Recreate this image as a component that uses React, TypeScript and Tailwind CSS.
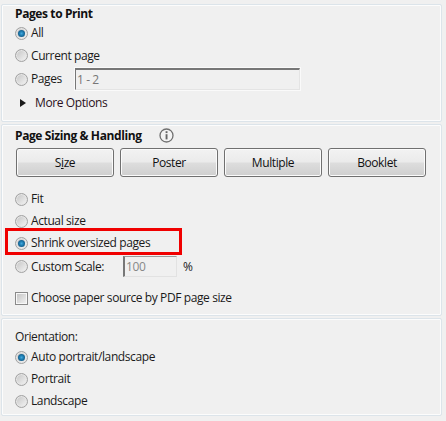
import React from "react";

const font = { fontFamily: '"Open Sans", "Noto Sans", sans-serif' };

function Radio({ checked = false }: { checked?: boolean }) {
  return (
    <span className="relative flex h-[13px] w-[13px] shrink-0 items-center justify-center rounded-full border border-[#a2a2a2] bg-gradient-to-br from-[#c4c4c4] to-[#f6f6f6] shadow-[inset_0_0_0_1px_#e6e6e6]">
      {checked && (
        <span className="h-[7px] w-[7px] rounded-full bg-[radial-gradient(circle,#42a8dc_0%,#1c78ac_45%,#0c3f62_100%)]" />
      )}
    </span>
  );
}

function RadioRow({ label, checked, h = 22 }: { label: string; checked?: boolean; h?: number }) {
  return (
    <div className="flex items-center gap-[3px]" style={{ height: h }}>
      <Radio checked={checked} />
      <span>{label}</span>
    </div>
  );
}

function Btn({ children }: { children: React.ReactNode }) {
  return (
    <button className="h-[29px] w-[98px] rounded-[3px] border border-[#707070] bg-[linear-gradient(#f2f2f2_0%,#ebebeb_48%,#dddddd_52%,#cfcfcf_100%)] text-center text-[12px] text-[#111] shadow-[inset_0_0_0_1px_#fbfbfb]">
      {children}
    </button>
  );
}

export default function App() {
  return (
    <div
      className="relative flex h-[421px] w-[446px] flex-col gap-[2px] overflow-hidden bg-[#f0f0f0] pl-[1px] pr-[4px] pt-[4px] text-[12px] leading-none tracking-[-0.4px] text-[#1a1a1a]"
      style={font}
    >
      <section className="h-[118px] rounded-[2px] border border-[#dce4ea] pl-[13px] shadow-[inset_0_0_0_1px_#fcfcfc]">
        <div className="flex h-[15px] items-end font-bold text-[#111]">Pages to Print</div>
        <div className="h-[2px]" />
        <RadioRow label="All" checked />
        <RadioRow label="Current page" h={23} />
        <div className="flex h-[24px] items-center">
          <Radio />
          <span className="ml-[3px] w-[44px]">Pages</span>
          <div className="flex h-[22px] w-[225px] items-center border border-[#e4e4e4] border-l-[#777] border-t-2 border-t-[#777] bg-[#f0f0f0] pl-[1px] text-[#777] shadow-[0_0_0_1px_#fafafa]">
            1 - 2
          </div>
        </div>
        <div className="flex h-[23px] items-center pl-[5px]">
          <svg width="6" height="8" viewBox="0 0 6 8" className="shrink-0">
            <path d="M0 0 L6 4 L0 8 Z" fill="#1a1a1a" />
          </svg>
          <span className="ml-[9px] text-[#2a1020]">More Options</span>
        </div>
      </section>

      <section className="h-[192px] rounded-[2px] border border-[#dce4ea] pl-[13px] shadow-[inset_0_0_0_1px_#fcfcfc]">
        <div className="flex h-[17px] items-end font-bold text-[#111]">
          <span>Page Sizing &amp; Handling</span>
          <svg width="15" height="15" viewBox="0 0 15 15" className="ml-[17px] mb-[-1px]">
            <circle cx="7.5" cy="7.5" r="6.5" fill="#f4f4f4" stroke="#707070" strokeWidth="1.3" />
            <rect x="6.6" y="3.2" width="1.9" height="1.9" fill="#666" />
            <rect x="6.6" y="6.2" width="1.9" height="5.2" fill="#666" />
          </svg>
        </div>
        <div className="mt-[6px] flex gap-[6px] pl-[1px]">
          <Btn>
            <span>S</span>
            <span className="underline">i</span>
            <span>ze</span>
          </Btn>
          <Btn>Poster</Btn>
          <Btn>Multiple</Btn>
          <Btn>Booklet</Btn>
        </div>
        <div className="h-[11px]" />
        <RadioRow label="Fit" />
        <RadioRow label="Actual size" />
        <RadioRow label="Shrink oversized pages" checked />
        <div className="flex h-[25px] items-center">
          <Radio />
          <span className="ml-[3px] w-[92px]">Custom Scale:</span>
          <div className="flex h-[21px] w-[54px] items-center border border-[#e2e2e2] border-l-2 border-l-[#777] border-t-[#9a9a9a] bg-[#f0f0f0] pl-[1px] text-[#888]">
            100
          </div>
          <span className="ml-[6px]">%</span>
        </div>
        <div className="mt-[8px] flex h-[22px] items-center gap-[3px]">
          <span className="flex h-[13px] w-[13px] shrink-0 border border-[#8a8a8a] bg-[#f8f8f8] p-[1px]">
            <span className="h-full w-full bg-gradient-to-br from-[#c6c6c6] to-[#f0f0f0]" />
          </span>
          <span>Choose paper source by PDF page size</span>
        </div>
      </section>

      <section className="h-[98px] rounded-[2px] border border-[#dce4ea] pl-[13px] shadow-[inset_0_0_0_1px_#fcfcfc]">
        <div className="flex h-[24px] items-end">Orientation:</div>
        <div className="h-[3px]" />
        <RadioRow label="Auto portrait/landscape" checked />
        <RadioRow label="Portrait" />
        <RadioRow label="Landscape" />
      </section>

      <div className="pointer-events-none absolute left-[5px] top-[228px] h-[27px] w-[177px] border-[3px] border-[#f00000]" />
    </div>
  );
}
